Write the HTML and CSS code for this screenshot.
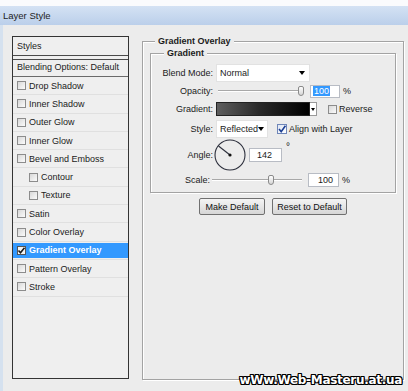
FILE: index.html
```html
<!DOCTYPE html>
<html lang="en">
<head>
    <meta charset="UTF-8">
    <meta name="viewport" content="width=device-width, initial-scale=1.0">
    <title>Layer Style</title>
    <link rel="stylesheet" href="styles.css">
</head>
<body>
    <div class="titlebar">Layer Style</div>

    <div class="dialog">
        <div class="styles-panel">
            <div class="panel-head">Styles</div>
            <div class="panel-blend">Blending Options: Default</div>
            <ul class="style-list">
                <li><span class="check"></span>Drop Shadow</li>
                <li><span class="check"></span>Inner Shadow</li>
                <li><span class="check"></span>Outer Glow</li>
                <li><span class="check"></span>Inner Glow</li>
                <li><span class="check"></span>Bevel and Emboss</li>
                <li class="sub"><span class="check"></span>Contour</li>
                <li class="sub"><span class="check"></span>Texture</li>
                <li><span class="check"></span>Satin</li>
                <li><span class="check"></span>Color Overlay</li>
                <li class="selected"><span class="item-inner"><span class="check checked"><svg width="9" height="9" viewBox="0 0 9 9"><path d="M1.5 4.5 L3.5 6.8 L7.5 1.8" fill="none" stroke="#1a1a1a" stroke-width="1.6"/></svg></span>Gradient Overlay</span></li>
                <li><span class="check"></span>Pattern Overlay</li>
                <li><span class="check"></span>Stroke</li>
            </ul>
        </div>

        <div class="options">
            <fieldset class="group">
                <legend>Gradient Overlay</legend>
                <fieldset class="group inner">
                    <legend>Gradient</legend>

                    <div class="field field-blend">
                        <span class="field-label">Blend Mode:</span>
                        <span class="select select-wide">Normal<span class="arrow"></span></span>
                    </div>

                    <div class="field field-opacity">
                        <span class="field-label">Opacity:</span>
                        <span class="slider slider-opacity"><span class="thumb" style="left: 80px"></span></span>
                        <span class="number number-opacity"><span class="selection">100</span></span>
                        <span class="unit">%</span>
                    </div>

                    <div class="field field-gradient">
                        <span class="field-label">Gradient:</span>
                        <span class="swatch"></span>
                        <span class="swatch-arrow"><span class="arrow"></span></span>
                        <span class="check check-reverse"></span>
                        <span class="check-text">Reverse</span>
                    </div>

                    <div class="field field-style">
                        <span class="field-label">Style:</span>
                        <span class="select select-narrow">Reflected<span class="arrow"></span></span>
                        <span class="check check-align checked"><svg width="10" height="10" viewBox="0 0 10 10"><path d="M2 5 L4.2 7.6 L8.4 1.8" fill="none" stroke="#1c3f94" stroke-width="1.6"/></svg></span>
                        <span class="check-text">Align with Layer</span>
                    </div>

                    <div class="field field-angle">
                        <span class="field-label">Angle:</span>
                        <svg class="dial" width="32" height="32" viewBox="0 0 32 32">
                            <circle cx="16" cy="16" r="15" fill="none" stroke="#2c2f3c" stroke-width="1.1"/>
                            <line x1="16" y1="16" x2="4.5" y2="7" stroke="#2c2f3c" stroke-width="1.1"/>
                            <circle cx="16" cy="16" r="1.6" fill="#111"/>
                        </svg>
                        <span class="number number-angle">142</span>
                        <span class="degree">°</span>
                    </div>

                    <div class="field field-scale">
                        <span class="field-label">Scale:</span>
                        <span class="slider slider-scale"><span class="thumb" style="left: 56px"></span></span>
                        <span class="number number-scale">100</span>
                        <span class="unit">%</span>
                    </div>
                </fieldset>

                <div class="buttons">
                    <button class="btn btn-make">Make Default</button>
                    <button class="btn btn-reset">Reset to Default</button>
                </div>
            </fieldset>
        </div>
    </div>

    <div class="watermark">wWw.Web-Masteru.at.ua</div>
</body>
</html>
```

FILE: styles.css
```css
* {
    margin: 0;
    padding: 0;
    box-sizing: border-box;
}

body {
    width: 408px;
    height: 391px;
    position: relative;
    overflow: hidden;
    background-color: #ececec;
    border-top: 6px solid #fafbfd;
    font-family: "Liberation Sans", Arial, sans-serif;
    font-size: 9px;
    color: #1b1b1b;
}

.titlebar {
    height: 19px;
    line-height: 19px;
    padding-left: 3px;
    font-size: 9.5px;
    color: #1e1e1e;
    background: linear-gradient(#d4e2f4, #bbcfea);
}

.dialog {
    display: flex;
    height: 366px;
    padding: 11px 4px 0 9px;
    border-left: 3px solid #d5e1ef;
}

/* left list of styles */
.styles-panel {
    flex-shrink: 0;
    width: 117px;
    height: 343px;
    border: 1px solid #343434;
    background-color: #efefef;
}

.panel-head {
    height: 19px;
    line-height: 18px;
    padding-left: 4px;
    border-bottom: 1px solid #4a4a4a;
}

.panel-blend {
    height: 18px;
    margin-top: 3px;
    line-height: 14px;
    padding-left: 4px;
    border-top: 1px solid #4a4a4a;
    border-bottom: 1px solid #6a6a6a;
}

.style-list {
    list-style-type: none;
}

.style-list li {
    display: flex;
    align-items: center;
    height: 18.3px;
    padding-left: 4px;
    border-bottom: 1px solid #e0e0e0;
}

.style-list li.sub {
    padding-left: 16px;
}

.style-list li.selected {
    padding-left: 0;
}

.item-inner {
    display: flex;
    align-items: center;
    width: 100%;
    height: 15px;
    padding-left: 4px;
    background-color: #3399ff;
    color: #fff;
    font-weight: bold;
}

.check {
    display: inline-flex;
    flex-shrink: 0;
    width: 9px;
    height: 9px;
    margin-right: 3px;
    border: 1px solid #8c8c8c;
    background: linear-gradient(135deg, #d8d8d8, #fbfbfb);
}

.check svg {
    margin: -1px;
}

.selected .check {
    background: #f4f4f4;
    border-color: #555;
}

/* right options */
.options {
    width: 262px;
    margin-left: 13px;
}

.group {
    border: 1px solid #a3a3a3;
    box-shadow: 1px 1px 0 #fff, inset 1px 1px 0 #fff;
    padding: 0 7px;
    height: 344px;
}

.group legend {
    margin-left: 5px;
    padding: 0 3px;
    line-height: 11px;
    font-weight: bold;
    background-color: #ececec;
}

.group.inner {
    height: auto;
    margin-top: 1px;
    padding: 0 8px 4px;
}

.field {
    display: flex;
    align-items: center;
}

.field-label {
    width: 54px;
    margin-right: 3px;
    text-align: right;
    flex-shrink: 0;
}

.field-blend {
    height: 18px;
    margin-top: 5px;
}

.field-opacity {
    height: 16px;
    margin-top: 1px;
}

.field-gradient {
    height: 16px;
    margin-top: 2px;
}

.field-style {
    height: 18px;
    margin-top: 3px;
}

.field-angle {
    height: 31px;
    margin-top: 1px;
}

.field-scale {
    height: 16px;
    margin-top: 2px;
}

.field-scale .field-label {
    padding-right: 3px;
}

.select {
    display: flex;
    align-items: center;
    justify-content: space-between;
    height: 18px;
    padding: 0 4px 0 3px;
    background-color: #fff;
    border: 1px solid #e2e2e2;
}

.select-wide {
    width: 94px;
}

.select-narrow {
    width: 52px;
    padding-right: 3px;
}

.arrow {
    width: 0;
    height: 0;
    border-left: 3px solid transparent;
    border-right: 3px solid transparent;
    border-top: 4px solid #000;
}

.slider {
    position: relative;
    height: 10px;
}

.slider::before {
    content: "";
    position: absolute;
    left: 0;
    right: 0;
    top: 4px;
    border-top: 1px solid #a8a8a8;
    border-bottom: 1px solid #fff;
}

.slider-opacity {
    width: 86px;
    margin-left: 2px;
}

.slider-scale {
    width: 90px;
    margin-left: -4px;
}

.thumb {
    position: absolute;
    top: 0;
    width: 6px;
    height: 10px;
    border: 1px solid #8a8a8a;
    border-radius: 2px 2px 3px 3px;
    background: linear-gradient(#fdfdfd, #d6d6d6);
}

.number {
    display: flex;
    align-items: center;
    height: 14px;
    padding-left: 3px;
    background-color: #fff;
    border: 1px solid #b8bcc4;
}

.number-opacity {
    width: 30px;
    height: 13px;
    margin-left: 6px;
}

.selection {
    background-color: #3399ff;
    color: #fff;
    padding: 0 1px;
    margin-left: -1px;
}

.number-angle {
    width: 33px;
    margin-left: 3px;
    padding-left: 7px;
}

.number-scale {
    width: 31px;
    margin-left: 6px;
    padding-left: 9px;
}

.unit {
    margin-left: 3px;
}

.degree {
    align-self: flex-start;
    margin-top: 2px;
    margin-left: 4px;
    font-size: 10px;
    color: #222;
}

.dial {
    margin-left: -2px;
}

.swatch {
    width: 94px;
    height: 14px;
    border: 1px solid #222;
    background: linear-gradient(to right, #5e5e5e, #2a2a2a 45%, #000);
}

.swatch-arrow {
    display: flex;
    align-items: center;
    justify-content: center;
    width: 7px;
    height: 14px;
    background-color: #fff;
    border: 1px solid #999;
    border-left: none;
}

.swatch-arrow .arrow {
    border-left-width: 2px;
    border-right-width: 2px;
    border-top-width: 3px;
}

.check-reverse {
    margin-left: 11px;
    margin-right: 2px;
}

.check-align {
    width: 10px;
    height: 10px;
    margin-left: 9px;
    margin-right: 2px;
    border-color: #6f86b8;
    background: linear-gradient(135deg, #dfe6f3, #fff);
}

.buttons {
    display: flex;
    justify-content: center;
    gap: 7px;
    margin-top: 5px;
}

.btn {
    height: 17px;
    font-family: "Liberation Sans", Arial, sans-serif;
    font-size: 9px;
    color: #111;
    border: 1px solid #707070;
    border-radius: 2px;
    background: linear-gradient(#f4f4f4, #e6e6e6 50%, #d6d6d6);
}

.btn-make {
    width: 66px;
}

.btn-reset {
    width: 75px;
}

.watermark {
    position: absolute;
    right: 6px;
    bottom: 4px;
    font-family: "DejaVu Sans", sans-serif;
    font-size: 12px;
    font-weight: bold;
    color: #fff;
    letter-spacing: -0.3px;
    text-shadow: 1px 0 0 #000, -1px 0 0 #000, 0 1px 0 #000, 0 -1px 0 #000,
        1px 1px 0 #000, -1px -1px 0 #000, 1px -1px 0 #000, -1px 1px 0 #000;
}
```
